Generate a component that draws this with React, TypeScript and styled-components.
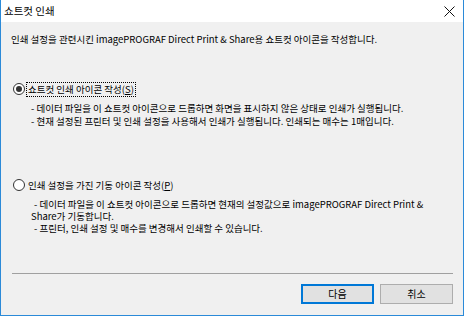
import styled, { createGlobalStyle } from 'styled-components';

const GlobalStyle = createGlobalStyle`
    html, body {
        margin: 0;
        padding: 0;
        background: #ffffff;
    }
    body {
        font-family: "Noto Sans CJK KR", "Noto Sans", sans-serif;
        font-size: 9.5px;
        color: #000000;
    }
`;

const Window = styled.div`
    width: 464px;
    height: 316px;
    box-sizing: border-box;
    border: 1px solid #2b8ad8;
    border-top: none;
    display: flex;
    flex-direction: column;
    background: #f0f0f0;
`;

const TitleBar = styled.div`
    height: 22px;
    flex: none;
    background: #ffffff;
    display: flex;
    align-items: center;
    justify-content: space-between;
    padding: 0 6px 0 3px;
`;

const Title = styled.span`
    font-size: 10.5px;
    line-height: 22px;
    color: #000000;
`;

const CloseBtn = styled.span`
    display: flex;
    width: 14px;
    height: 14px;
    align-items: center;
    justify-content: center;
    margin-right: 1px;
`;

const Body = styled.div`
    flex: 1;
    display: flex;
    flex-direction: column;
    padding: 11px 10px 0 10px;
`;

const Intro = styled.p`
    margin: 0;
    line-height: 13px;
    white-space: nowrap;
`;

const Option = styled.div<{ $top: number }>`
    display: flex;
    flex-direction: column;
    margin-top: ${p => p.$top}px;
`;

const RadioRow = styled.div`
    display: flex;
    align-items: center;
    height: 14px;
    padding-left: 2px;
    gap: 2px;
`;

const RadioDot = styled.span<{ $checked?: boolean }>`
    width: 12px;
    height: 12px;
    box-sizing: border-box;
    border: 1px solid #333333;
    border-radius: 50%;
    background: #ffffff;
    display: flex;
    align-items: center;
    justify-content: center;
    flex: none;

    &::after {
        content: '';
        width: 6px;
        height: 6px;
        border-radius: 50%;
        background: #333333;
        display: ${p => (p.$checked ? 'block' : 'none')};
    }
`;

const RadioLabel = styled.span<{ $focused?: boolean }>`
    line-height: 13px;
    padding: 0 1px;
    outline: ${p => (p.$focused ? '1px dotted #000000' : 'none')};
    outline-offset: 0;
    white-space: nowrap;
`;

const Key = styled.span`
    text-decoration: underline;
`;

const Notes = styled.div<{ $line: number }>`
    margin-top: 6px;
    padding-left: 20px;
    line-height: ${p => p.$line}px;
    white-space: nowrap;
`;

const Note = styled.div<{ $indent?: number }>`
    padding-left: ${p => p.$indent ?? 0}px;
`;

const Spacer = styled.div`
    flex: 1;
`;

const Separator = styled.div`
    height: 1px;
    margin: 0 0 10px 1px;
    background: #a0a0a0;
`;

const ButtonRow = styled.div`
    display: flex;
    justify-content: flex-end;
    gap: 6px;
    margin-bottom: 11px;
`;

const Button = styled.button<{ $default?: boolean }>`
    width: 73px;
    height: 20px;
    box-sizing: border-box;
    font-family: inherit;
    font-size: 10px;
    line-height: 1;
    color: #000000;
    background: #e1e1e1;
    border: ${p => (p.$default ? '2px solid #0078d7' : '1px solid #adadad')};
    padding: 0;
`;

const App = () => {
    return (
        <>
            <GlobalStyle />
            <Window>
                <TitleBar>
                    <Title>쇼트컷 인쇄</Title>
                    <CloseBtn>
                        <svg width="11" height="11" viewBox="0 0 11 11">
                            <path d="M0.5 0.5 L10.5 10.5 M10.5 0.5 L0.5 10.5" stroke="#111" strokeWidth="1" />
                        </svg>
                    </CloseBtn>
                </TitleBar>
                <Body>
                    <Intro>인쇄 설정을 관련시킨 imagePROGRAF Direct Print &amp; Share용 쇼트컷 아이콘을 작성합니다.</Intro>

                    <Option $top={36}>
                        <RadioRow>
                            <RadioDot $checked />
                            <RadioLabel $focused>쇼트컷 인쇄 아이콘 작성(<Key>S</Key>)</RadioLabel>
                        </RadioRow>
                        <Notes $line={13}>
                            <Note>- 데이터 파일을 이 쇼트컷 아이콘으로 드롭하면 화면을 표시하지 않은 상태로 인쇄가 실행됩니다.</Note>
                            <Note>- 현재 설정된 프린터 및 인쇄 설정을 사용해서 인쇄가 실행됩니다. 인쇄되는 매수는 1매입니다.</Note>
                        </Notes>
                    </Option>

                    <Option $top={50}>
                        <RadioRow>
                            <RadioDot />
                            <RadioLabel>인쇄 설정을 가진 기동 아이콘 작성(<Key>P</Key>)</RadioLabel>
                        </RadioRow>
                        <Notes $line={12}>
                            <Note $indent={3}>- 데이터 파일을 이 쇼트컷 아이콘으로 드롭하면 현재의 설정값으로 imagePROGRAF Direct Print &amp;</Note>
                            <Note>Share가 기동합니다.</Note>
                            <Note $indent={3}>- 프린터, 인쇄 설정 및 매수를 변경해서 인쇄할 수 있습니다.</Note>
                        </Notes>
                    </Option>

                    <Spacer />
                    <Separator />
                    <ButtonRow>
                        <Button $default>다음</Button>
                        <Button>취소</Button>
                    </ButtonRow>
                </Body>
            </Window>
        </>
    );
};

export default App;
